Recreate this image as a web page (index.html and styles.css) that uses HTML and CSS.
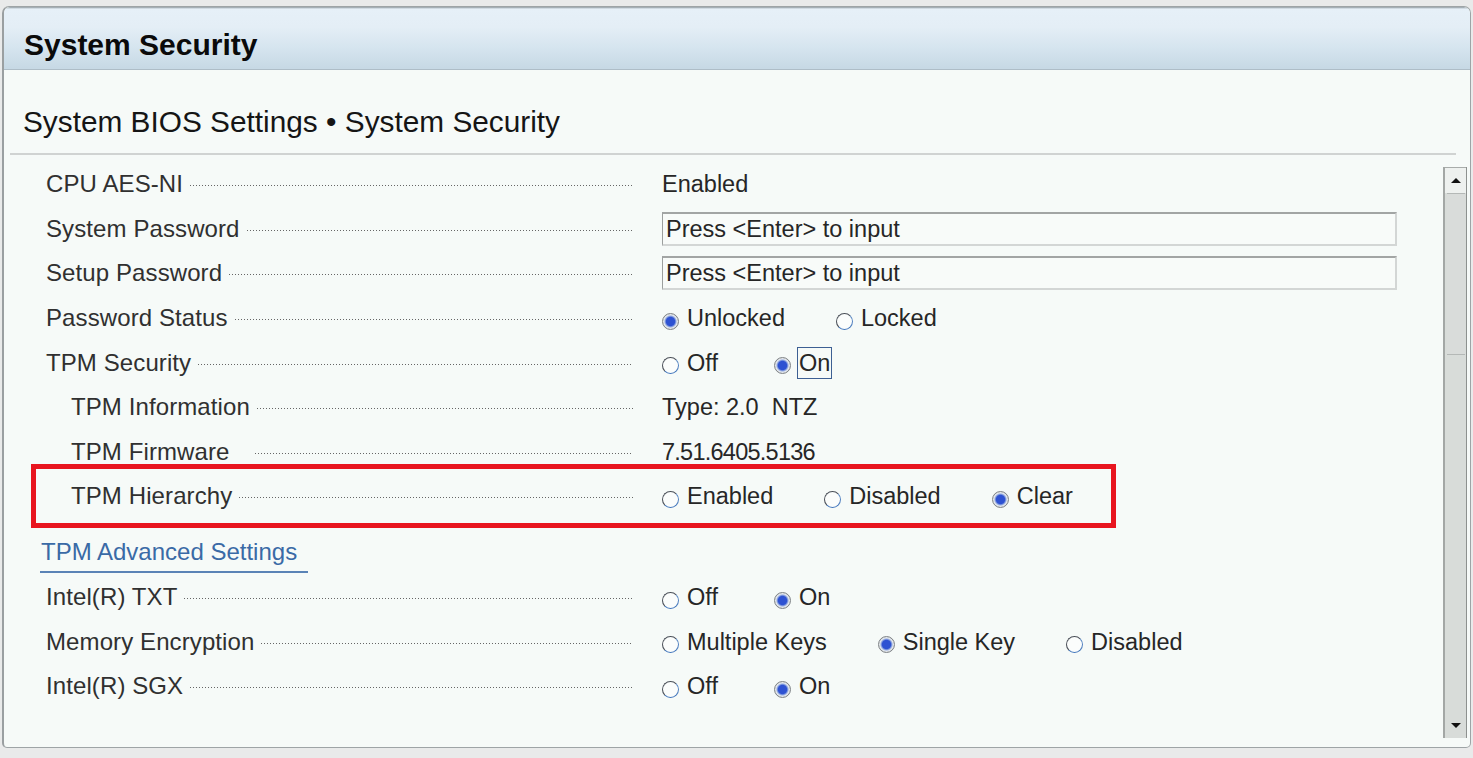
FILE: index.html
```html
<!DOCTYPE html>
<html lang="en">
<head>
<meta charset="utf-8">
<title>System Security</title>
<link rel="stylesheet" href="styles.css">
</head>
<body>
<div class="panel">
  <div class="header">System Security</div>
  <div class="subtitle">System BIOS Settings • System Security</div>
  <div class="rule"></div>
  <div class="content">
    <div class="rows">
      <div class="row">
        <div class="label"><span class="text">CPU AES-NI</span><i class="leader"></i></div>
        <div class="value">Enabled</div>
      </div>
      <div class="row">
        <div class="label"><span class="text">System Password</span><i class="leader"></i></div>
        <div class="value"><div class="field">Press &lt;Enter&gt; to input</div></div>
      </div>
      <div class="row">
        <div class="label"><span class="text">Setup Password</span><i class="leader"></i></div>
        <div class="value"><div class="field">Press &lt;Enter&gt; to input</div></div>
      </div>
      <div class="row">
        <div class="label"><span class="text">Password Status</span><i class="leader"></i></div>
        <div class="value radios">
          <span class="opt"><i class="radio on"></i>Unlocked</span>
          <span class="opt"><i class="radio"></i>Locked</span>
        </div>
      </div>
      <div class="row">
        <div class="label"><span class="text">TPM Security</span><i class="leader"></i></div>
        <div class="value radios">
          <span class="opt"><i class="radio"></i>Off</span>
          <span class="opt"><i class="radio on"></i><span class="focus">On</span></span>
        </div>
      </div>
      <div class="row sub">
        <div class="label"><span class="text">TPM Information</span><i class="leader"></i></div>
        <div class="value pre">Type: 2.0  NTZ</div>
      </div>
      <div class="row sub">
        <div class="label"><span class="text wide">TPM Firmware</span><i class="leader"></i></div>
        <div class="value narrow">7.51.6405.5136</div>
      </div>
      <div class="row sub marked">
        <div class="label"><span class="text">TPM Hierarchy</span><i class="leader"></i></div>
        <div class="value radios">
          <span class="opt"><i class="radio"></i>Enabled</span>
          <span class="opt"><i class="radio"></i>Disabled</span>
          <span class="opt"><i class="radio on"></i>Clear</span>
        </div>
      </div>
      <div class="section"><span class="link">TPM Advanced Settings</span></div>
      <div class="row">
        <div class="label"><span class="text">Intel(R) TXT</span><i class="leader"></i></div>
        <div class="value radios">
          <span class="opt"><i class="radio"></i>Off</span>
          <span class="opt"><i class="radio on"></i>On</span>
        </div>
      </div>
      <div class="row">
        <div class="label"><span class="text">Memory Encryption</span><i class="leader"></i></div>
        <div class="value radios">
          <span class="opt"><i class="radio"></i>Multiple Keys</span>
          <span class="opt"><i class="radio on"></i>Single Key</span>
          <span class="opt"><i class="radio"></i>Disabled</span>
        </div>
      </div>
      <div class="row">
        <div class="label"><span class="text">Intel(R) SGX</span><i class="leader"></i></div>
        <div class="value radios">
          <span class="opt"><i class="radio"></i>Off</span>
          <span class="opt"><i class="radio on"></i>On</span>
        </div>
      </div>
    </div>
    <div class="scrollbar">
      <div class="sb-btn"><span class="tri-up"></span></div>
      <div class="sb-thumb"></div>
      <div class="sb-track"></div>
      <div class="sb-btn"><span class="tri-down"></span></div>
    </div>
  </div>
</div>
</body>
</html>
```
FILE: styles.css
```css
*, *::before, *::after { box-sizing: border-box; }

html, body {
  margin: 0;
  padding: 0;
}

body {
  background: #e9eaea;
  font-family: "Liberation Sans", Arial, sans-serif;
  color: #2b2b2b;
  width: 1473px;
  height: 758px;
  overflow: hidden;
}

.panel {
  margin: 6px 0 0 2px;
  width: 1469px;
  height: 742px;
  border: 1px solid #9ea4a6;
  border-left: 2px solid #9a9fa1;
  border-radius: 7px 7px 5px 5px;
  background: #f6faf8;
  display: flex;
  flex-direction: column;
  overflow: hidden;
}

.header {
  height: 63px;
  padding: 21px 0 0 20px;
  font-size: 30px;
  line-height: 34px;
  font-weight: bold;
  color: #0a0a0a;
  background: linear-gradient(to bottom, #8f9aa0 0px, #e6f0f8 2px, #e4eef6 20px, #d6e5ef 40px, #c7d9e5 61px);
  border-bottom: 1px solid #aebdc7;
  border-radius: 6px 6px 0 0;
}

.subtitle {
  height: 83px;
  padding: 35px 0 0 19px;
  font-size: 29.8px;
  line-height: 34px;
  color: #151515;
}

.rule {
  height: 2px;
  margin: 0 14px 0 6px;
  background: #d0d3d2;
}

.content {
  flex: 1;
  display: flex;
}

.rows {
  flex: 1;
  padding-top: 7px;
}

.row {
  height: 44.6px;
  display: grid;
  grid-template-columns: 587px 1fr;
  column-gap: 29px;
  align-items: center;
  padding-left: 42px;
  line-height: 28px;
}

.row.sub .label { padding-left: 25px; }

.row.marked { position: relative; }
.row.marked::after {
  content: "";
  position: absolute;
  left: 27px;
  top: -10px;
  width: 1085px;
  bottom: -9px;
  border: 5px solid #e8151f;
}

.label {
  display: flex;
  align-items: center;
  color: #303030;
  font-size: 24px;
  letter-spacing: 0.1px;
}

.label .text { white-space: nowrap; }
.label .text.wide { margin-right: 18px; }

.leader {
  flex: 1;
  height: 1px;
  margin: 3px 0 0 7px;
  background-image: linear-gradient(to right, #666 1px, transparent 1px);
  background-size: 3px 1px;
  background-repeat: repeat-x;
}

.value {
  color: #262626;
  white-space: nowrap;
  font-size: 23.5px;
}

.value.pre { white-space: pre; }
.value.narrow { letter-spacing: -0.75px; }

.field {
  width: 735px;
  height: 34px;
  border: 2px solid #d3d6d5;
  border-top-color: #a2a5a4;
  border-left: 1px solid #9c9f9e;
  padding-left: 3px;
  line-height: 30px;
  background: #f8fbf9;
}

.radios {
  display: flex;
  gap: 51px;
}

.opt {
  display: flex;
  align-items: center;
  min-width: 61px;
}

.radio {
  width: 17px;
  height: 17px;
  margin: 6px 8px 0 0;
  border-radius: 50%;
  border: 1.5px solid;
  border-color: #4a4f58 #4f7fbf #3f74bb #4a4f58;
  background: #fbfdfc;
  flex: none;
}

.radio.on {
  border: 1px solid #7e8286;
  background: radial-gradient(circle, #2e52d2 0, #2e52d2 4.2px, #8fa6e0 5.4px, #e9ecef 6.6px, #d9dde0 7.5px);
}

.focus {
  outline: 1.5px solid #3d5f93;
  outline-offset: 1px;
}

.section {
  height: 56px;
  padding: 19px 0 0 36px;
}

.link {
  display: inline-block;
  font-size: 24px;
  line-height: 28px;
  color: #3a6aa6;
  padding: 0 11px 5px 1px;
  border-bottom: 2px solid #5a83b6;
}

.scrollbar {
  width: 24px;
  margin: 12px 3px 9px 0;
  display: flex;
  flex-direction: column;
  background: #d8dcd9;
  border-left: 2px solid #a3a7a5;
  border-right: 1px solid #8d918f;
}

.sb-btn {
  height: 26px;
  display: flex;
  align-items: center;
  justify-content: center;
  background: #eef1ef;
  border-top: 1px solid #a8acaa;
}

.sb-btn:last-child {
  border-top: none;
  background: #d8dcd9;
}

.sb-thumb {
  height: 162px;
  margin: 0 1px 0 2px;
  background: #d9dcda;
  border-top: 1px solid #b4b8b6;
  border-bottom: 1px solid #b4b8b6;
}

.sb-track { flex: 1; }

.tri-up {
  width: 0;
  height: 0;
  border-left: 5px solid transparent;
  border-right: 5px solid transparent;
  border-bottom: 5px solid #111;
}

.tri-down {
  width: 0;
  height: 0;
  border-left: 5px solid transparent;
  border-right: 5px solid transparent;
  border-top: 5px solid #111;
}
```
